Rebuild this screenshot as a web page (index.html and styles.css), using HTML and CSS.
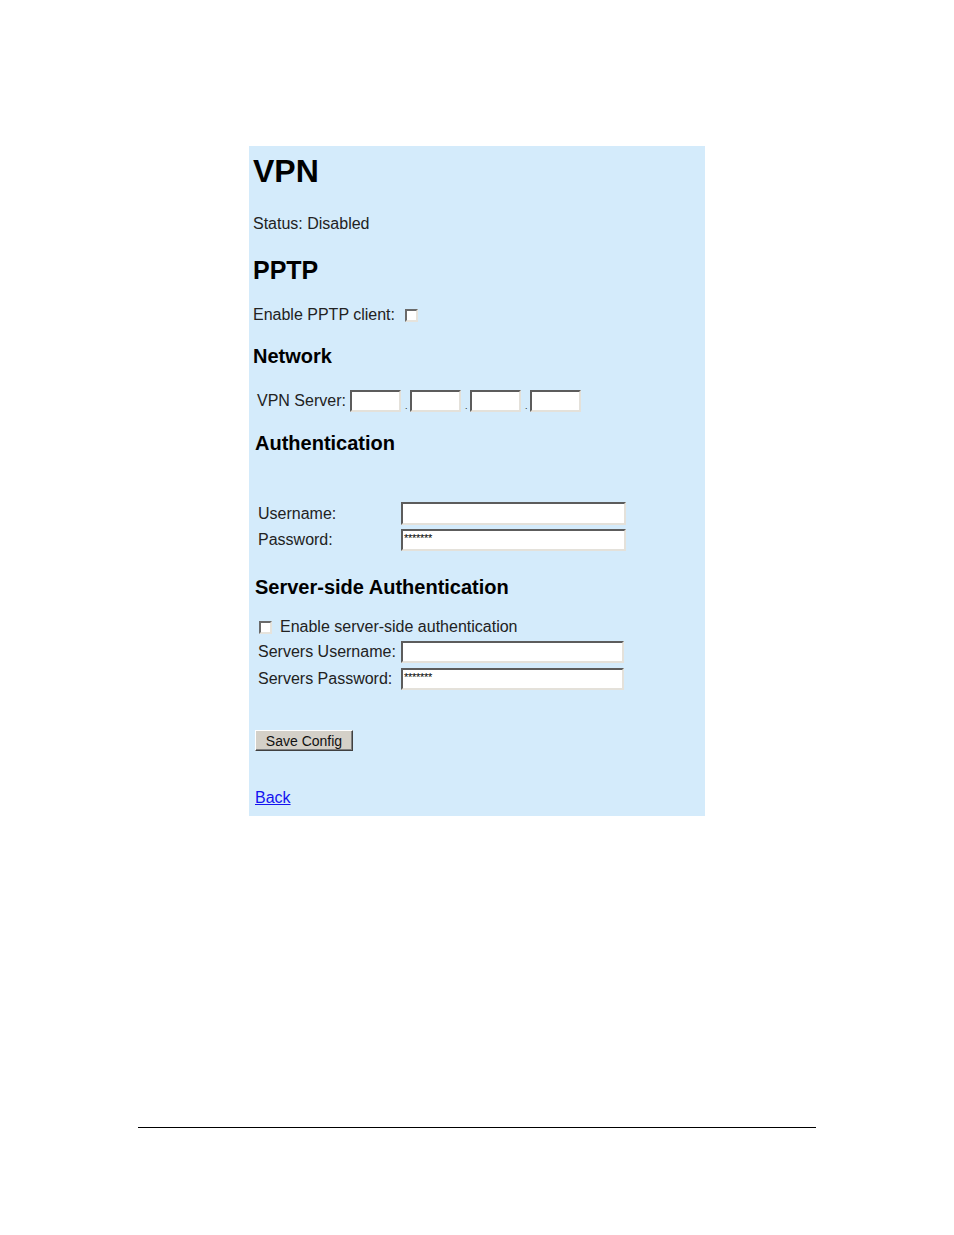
FILE: index.html
```html
<!DOCTYPE html>
<html>
<head>
<meta charset="utf-8">
<title>VPN</title>
<link rel="stylesheet" href="styles.css">
</head>
<body>
<div class="page">
  <div class="panel">
    <h1 class="title">VPN</h1>
    <p class="line status">Status: Disabled</p>
    <h2 class="sub">PPTP</h2>
    <div class="line check-line">
      <span>Enable PPTP client:</span>
      <span class="box box-pptp"></span>
    </div>
    <h3 class="sect sect-network">Network</h3>
    <div class="ip-row">
      <span class="ip-label">VPN Server:</span>
      <span class="field ip"></span><span class="dot">.</span>
      <span class="field ip"></span><span class="dot">.</span>
      <span class="field ip"></span><span class="dot">.</span>
      <span class="field ip"></span>
    </div>
    <h3 class="sect sect-auth">Authentication</h3>
    <div class="form-grid auth-grid">
      <span class="lbl">Username:</span><span class="field wide tall"></span>
      <span class="lbl">Password:</span><span class="field wide"><span class="stars">*******</span></span>
    </div>
    <h3 class="sect sect-server">Server-side Authentication</h3>
    <div class="line check-line server-check">
      <span class="box"></span>
      <span>Enable server-side authentication</span>
    </div>
    <div class="form-grid server-grid">
      <span class="lbl">Servers Username:</span><span class="field narrow"></span>
      <span class="lbl">Servers Password:</span><span class="field narrow"><span class="stars">*******</span></span>
    </div>
    <div class="btn-row"><span class="btn">Save Config</span></div>
    <p class="line back"><a href="#" class="back-link">Back</a></p>
  </div>
  <div class="rule"></div>
</div>
</body>
</html>
```

FILE: styles.css
```css
html, body {
  margin: 0;
  padding: 0;
  background: #ffffff;
}

body {
  font-family: "Liberation Sans", Arial, sans-serif;
  color: #222;
}

.page {
  padding-top: 146px;
  width: 954px;
  height: 1235px;
  box-sizing: border-box;
}

.panel {
  margin-left: 249px;
  width: 456px;
  background: #d4ebfb;
  padding: 7px 4px 9px 4px;
  box-sizing: border-box;
}

.title {
  margin: 0;
  font-size: 32px;
  line-height: 37px;
  font-weight: bold;
  color: #000;
}

.line {
  margin: 0;
  font-size: 16px;
  line-height: 18px;
}

.status {
  margin-top: 25px;
}

.sub {
  margin: 23px 0 0 0;
  font-size: 25px;
  line-height: 28px;
  font-weight: bold;
  color: #000;
}

.check-line {
  display: flex;
  align-items: center;
  height: 18px;
  margin-top: 22px;
}

.box {
  display: inline-block;
  width: 13px;
  height: 13px;
  box-sizing: border-box;
  background: #fff;
  border: 2px solid;
  border-color: #6a6a6a #e6e3dc #e6e3dc #6a6a6a;
}

.box-pptp {
  margin-left: 10px;
}

.sect {
  margin: 0;
  font-size: 20px;
  line-height: 23px;
  font-weight: bold;
  color: #000;
}

.sect-network {
  margin-top: 21px;
}

.sect-auth {
  margin-top: 20px;
  margin-left: 2px;
}

.sect-server {
  margin-top: 25px;
  margin-left: 2px;
}

.ip-row {
  display: flex;
  align-items: center;
  margin-top: 22px;
  padding-left: 4px;
  height: 22px;
  font-size: 16px;
}

.ip-label {
  width: 93px;
}

.field {
  display: inline-block;
  box-sizing: border-box;
  background: #fff;
  border: 2px solid;
  border-color: #5c5c5c #e4e1da #e4e1da #5c5c5c;
  height: 22px;
  position: relative;
}

.ip {
  width: 51px;
}

.dot {
  width: 9px;
  font-size: 9px;
  align-self: flex-end;
  line-height: 10px;
  text-indent: 4px;
  margin-bottom: 1px;
}

.form-grid {
  display: grid;
  grid-template-columns: 143px auto;
  align-items: center;
  padding-left: 5px;
  font-size: 16px;
  line-height: 18px;
}

.auth-grid {
  margin-top: 47px;
  row-gap: 4px;
}

.wide {
  width: 225px;
}

.tall {
  height: 23px;
}

.narrow {
  width: 223px;
}

.stars {
  position: absolute;
  left: 1px;
  top: 2px;
  font-size: 11px;
  line-height: 11px;
  color: #000;
  letter-spacing: -0.3px;
}

.server-check {
  margin-top: 19px;
  padding-left: 6px;
  gap: 8px;
}

.server-grid {
  margin-top: 5px;
  row-gap: 5px;
}

.btn-row {
  margin-top: 40px;
  padding-left: 2px;
  display: flex;
}

.btn {
  display: inline-flex;
  align-items: center;
  justify-content: center;
  box-sizing: border-box;
  width: 98px;
  height: 21px;
  font-size: 14px;
  color: #111;
  background: #d4d0c8;
  border: 1px solid;
  border-color: #ffffff #404040 #404040 #ffffff;
  box-shadow: inset -1px -1px 0 #808080;
}

.back {
  margin-top: 38px;
  padding-left: 2px;
}

.back-link {
  color: #1414f0;
  text-decoration: underline;
}

.rule {
  margin-top: 311px;
  margin-left: 138px;
  width: 678px;
  height: 1px;
  background: #000;
}
```
